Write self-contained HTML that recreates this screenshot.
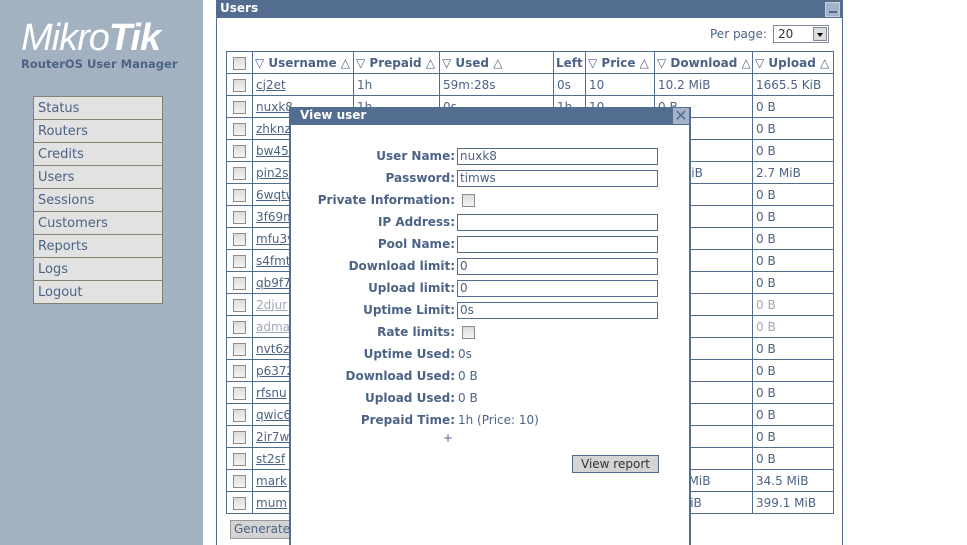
<!DOCTYPE html>
<html><head><meta charset="utf-8"><style>
*{box-sizing:border-box;margin:0;padding:0}
html,body{width:967px;height:545px;overflow:hidden}
body{background:#fff;font-family:"DejaVu Sans",Verdana,sans-serif;font-size:12px;color:#4c6386;position:relative}
.side{position:absolute;left:0;top:0;width:203px;height:545px;background:#a3b2c1}
.logo{position:absolute;left:21px;top:17px;font-family:"Liberation Sans",sans-serif;font-size:38px;color:#fff;letter-spacing:-1px;font-style:italic;font-weight:normal}
.logo b{font-weight:900}
.sub{position:absolute;left:21px;top:57px;font-weight:bold;font-size:11.5px;color:#4c6386}
.menu{position:absolute;left:33px;top:96px;width:130px;border:1px solid #85826f;border-bottom:none}
.menu div{height:23px;border-bottom:1px solid #85826f;background:#e2e2e2;padding-left:4px;line-height:24px;font-size:13px}
.panel{position:absolute;left:216px;top:0;width:627px;height:560px;border:1px solid #526d90;border-top:none}
.ph{height:18px;background:#526d90;color:#fff;font-weight:bold;font-size:12px;padding-left:3px;line-height:17px;position:relative}
.ph i{position:absolute;right:2px;top:2px;width:15px;height:15px;background:#a5b2c8;border:1px solid #c8d0dc}
.ph i:after{content:"";position:absolute;left:3px;bottom:3px;width:8px;height:2px;background:#526d90}
.pp{position:absolute;left:493px;top:27px;font-size:12px}
.sel{position:absolute;left:556px;top:25px;width:56px;height:18px;border:1px solid #7f8ba0;padding-left:4px;line-height:16px;color:#333}
.sel i{position:absolute;right:1px;top:1px;width:14px;height:14px;background:#ddd;border:1px solid #888}
.sel i:after{content:"";position:absolute;left:3px;top:5px;border:3px solid transparent;border-top:4px solid #000}
table{position:absolute;left:226px;top:51px;border-collapse:collapse;table-layout:fixed;width:607px}
td{border:1px solid #526d90;height:22px;padding:0 3px;white-space:nowrap;overflow:hidden;font-size:12px;color:#4c6386}
th{border:1px solid #526d90;height:22px;padding:0 2px;white-space:nowrap;overflow:hidden;font-size:12px;text-align:left;color:#4c6386}
.cb{display:inline-block;width:13px;height:13px;border:1px solid #8c8c8c;background:linear-gradient(#dcdcdc,#f4f4f4);vertical-align:middle}
td a{color:#4c6386;text-decoration:underline}
tr.g td a,tr.g td{color:#a0a8b8}
.gen{position:absolute;left:230px;top:520px;width:70px;height:19px;background:#d4d4d4;border:1px solid #999;font-size:12px;padding-left:3px;line-height:17px}
.dlg{position:absolute;left:289px;top:107px;width:402px;height:450px;background:#fff;border:2px solid #526d90;border-top:none}
.dh{height:18px;background:#526d90;color:#fff;font-weight:bold;padding-left:9px;line-height:17px;position:relative}
.dh i{position:absolute;right:0;top:1px;width:16px;height:16px;background:#a5b2c8;color:#526d90;font-style:normal;font-size:16px;line-height:15px;text-align:center}
.r{position:absolute;left:0;width:400px;height:18px}
.r .l{position:absolute;right:236px;top:2px;font-weight:bold;white-space:nowrap}
.r .v{position:absolute;left:167px;top:2px;white-space:nowrap}
.r .in{position:absolute;left:166px;top:1px;width:201px;height:17px;border:1px solid #526d90;font:12px "DejaVu Sans",sans-serif;color:#4c6386;padding-left:2px;line-height:15px}
.r .cb{position:absolute;left:171px;top:3px}
.btn{position:absolute;left:281px;top:348px;width:87px;height:18px;background:#d4d4d4;border:1px solid #526d90;color:#333;text-align:center;line-height:16px}
</style></head><body>
<div class="side">
<div class="logo">Mikro<b>Tik</b></div>
<div class="sub">RouterOS User Manager</div>
<div class="menu"><div>Status</div><div>Routers</div><div>Credits</div><div>Users</div><div>Sessions</div><div>Customers</div><div>Reports</div><div>Logs</div><div>Logout</div></div>
</div>
<div class="panel"><div class="ph">Users<i></i></div>
<div class="pp">Per page:</div><div class="sel">20<i></i></div>
</div>
<table>
<colgroup><col style="width:26px"><col style="width:101px"><col style="width:86px"><col style="width:114px"><col style="width:32px"><col style="width:69px"><col style="width:98px"><col style="width:81px"></colgroup>
<tr><th style="text-align:center"><span class="cb"></span></th><th>▽ Username △</th><th>▽ Prepaid △</th><th>▽ Used △</th><th>Left</th><th>▽ Price △</th><th>▽ Download △</th><th>▽ Upload △</th></tr>
<tr><td align=center><span class="cb"></span></td><td><a>cj2et</a></td><td>1h</td><td>59m:28s</td><td>0s</td><td>10</td><td>10.2 MiB</td><td>1665.5 KiB</td></tr>
<tr><td align=center><span class="cb"></span></td><td><a>nuxk8</a></td><td>1h</td><td>0s</td><td>1h</td><td>10</td><td>0 B</td><td>0 B</td></tr>
<tr><td align=center><span class="cb"></span></td><td><a>zhknz</a></td><td></td><td></td><td></td><td></td><td></td><td>0 B</td></tr>
<tr><td align=center><span class="cb"></span></td><td><a>bw452</a></td><td></td><td></td><td></td><td></td><td></td><td>0 B</td></tr>
<tr><td align=center><span class="cb"></span></td><td><a>pin2s</a></td><td></td><td></td><td></td><td></td><td>1.3 MiB</td><td>2.7 MiB</td></tr>
<tr><td align=center><span class="cb"></span></td><td><a>6wqtw</a></td><td></td><td></td><td></td><td></td><td></td><td>0 B</td></tr>
<tr><td align=center><span class="cb"></span></td><td><a>3f69m</a></td><td></td><td></td><td></td><td></td><td></td><td>0 B</td></tr>
<tr><td align=center><span class="cb"></span></td><td><a>mfu3v</a></td><td></td><td></td><td></td><td></td><td></td><td>0 B</td></tr>
<tr><td align=center><span class="cb"></span></td><td><a>s4fmt</a></td><td></td><td></td><td></td><td></td><td></td><td>0 B</td></tr>
<tr><td align=center><span class="cb"></span></td><td><a>qb9f7</a></td><td></td><td></td><td></td><td></td><td></td><td>0 B</td></tr>
<tr class="g"><td align=center><span class="cb"></span></td><td><a>2djur</a></td><td></td><td></td><td></td><td></td><td></td><td>0 B</td></tr>
<tr class="g"><td align=center><span class="cb"></span></td><td><a>adma</a></td><td></td><td></td><td></td><td></td><td></td><td>0 B</td></tr>
<tr><td align=center><span class="cb"></span></td><td><a>nvt6z</a></td><td></td><td></td><td></td><td></td><td></td><td>0 B</td></tr>
<tr><td align=center><span class="cb"></span></td><td><a>p6372</a></td><td></td><td></td><td></td><td></td><td></td><td>0 B</td></tr>
<tr><td align=center><span class="cb"></span></td><td><a>rfsnu</a></td><td></td><td></td><td></td><td></td><td></td><td>0 B</td></tr>
<tr><td align=center><span class="cb"></span></td><td><a>qwic6</a></td><td></td><td></td><td></td><td></td><td></td><td>0 B</td></tr>
<tr><td align=center><span class="cb"></span></td><td><a>2ir7w</a></td><td></td><td></td><td></td><td></td><td></td><td>0 B</td></tr>
<tr><td align=center><span class="cb"></span></td><td><a>st2sf</a></td><td></td><td></td><td></td><td></td><td></td><td>0 B</td></tr>
<tr><td align=center><span class="cb"></span></td><td><a>mark</a></td><td></td><td></td><td></td><td></td><td>12.4 MiB</td><td>34.5 MiB</td></tr>
<tr><td align=center><span class="cb"></span></td><td><a>mum</a></td><td></td><td></td><td></td><td></td><td>1.1 GiB</td><td>399.1 MiB</td></tr>
</table>
<div class="gen">Generate</div>
<div class="dlg"><div class="dh">View user<i>✕</i></div>
<div class="r" style="top:40px"><span class="l">User Name:</span><div class="in">nuxk8</div></div>
<div class="r" style="top:62px"><span class="l">Password:</span><div class="in">timws</div></div>
<div class="r" style="top:84px"><span class="l">Private Information:</span><span class="cb"></span></div>
<div class="r" style="top:106px"><span class="l">IP Address:</span><div class="in"></div></div>
<div class="r" style="top:128px"><span class="l">Pool Name:</span><div class="in"></div></div>
<div class="r" style="top:150px"><span class="l">Download limit:</span><div class="in">0</div></div>
<div class="r" style="top:172px"><span class="l">Upload limit:</span><div class="in">0</div></div>
<div class="r" style="top:194px"><span class="l">Uptime Limit:</span><div class="in">0s</div></div>
<div class="r" style="top:216px"><span class="l">Rate limits:</span><span class="cb"></span></div>
<div class="r" style="top:238px"><span class="l">Uptime Used:</span><span class="v">0s</span></div>
<div class="r" style="top:260px"><span class="l">Download Used:</span><span class="v">0 B</span></div>
<div class="r" style="top:282px"><span class="l">Upload Used:</span><span class="v">0 B</span></div>
<div class="r" style="top:304px"><span class="l">Prepaid Time:</span><span class="v">1h (Price: 10)</span></div>
<div style="position:absolute;left:152px;top:324px;color:#6b5aa0">+</div>
<div class="btn">View report</div>
</div>
</body></html>
